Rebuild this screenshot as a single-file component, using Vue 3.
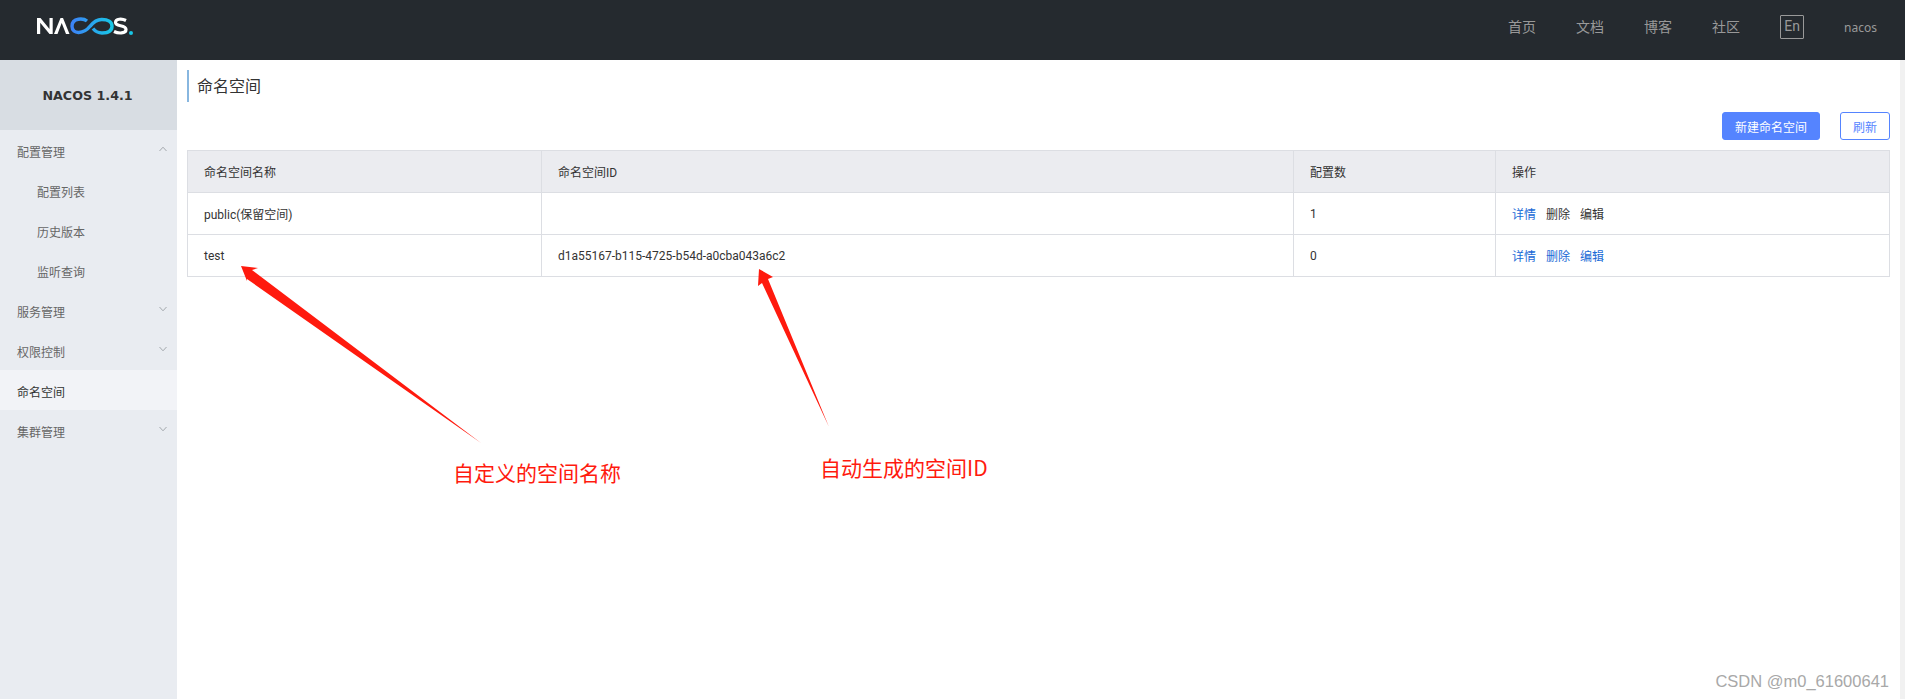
<script setup>
const menu = [
  { label: '配置管理', arrow: 'up' },
  { label: '配置列表', sub: true },
  { label: '历史版本', sub: true },
  { label: '监听查询', sub: true },
  { label: '服务管理', arrow: 'down' },
  { label: '权限控制', arrow: 'down' },
  { label: '命名空间', active: true },
  { label: '集群管理', arrow: 'down' }
]
const navs = ['首页', '文档', '博客', '社区']
const rows = [
  { name: 'public(保留空间)', id: '', count: 1, locked: true },
  { name: 'test', id: 'd1a55167-b115-4725-b54d-a0cba043a6c2', count: 0, locked: false }
]
</script>

<template>
  <div class="page">
    <header class="header">
      <svg class="logo" width="100" height="20" viewBox="0 0 100 20">
        <defs>
          <linearGradient id="loop" x1="0" x2="1" y1="0" y2="0">
            <stop offset="0" stop-color="#3c83f6" />
            <stop offset="1" stop-color="#18c6e6" />
          </linearGradient>
        </defs>
        <polygon points="1,18 1,2 4.5,2 13.5,13 13.5,2 16.7,2 16.7,18 13.5,18 4.2,6.8 4.2,18" fill="#fff" />
        <polygon points="18,18 24.5,2 27,2 33.5,18 30,18 25.7,7 21.5,18" fill="#fff" />
        <path d="M51 5C48 2.5 36 1 36 10.3C36 19 48 18 54 10.3C60 3 64 3.5 66 3.5C72 3.5 76 6 76 10.3C76 15 72 17 66 17C62 17 59 15 57 12.5" fill="none" stroke="url(#loop)" stroke-width="3.4" />
        <path d="M90 4.5C86 2.5 79.5 2.5 79.5 6.5C79.5 11 90 8.5 90 13.5C90 18 82 17.5 78 15.5" fill="none" stroke="#fff" stroke-width="3.2" />
        <circle cx="95" cy="17" r="2" fill="#18c6e6" />
      </svg>
      <nav class="nav">
        <a v-for="n in navs" :key="n" class="nav-item">{{ n }}</a>
        <span class="lang">En</span>
        <span class="user">nacos</span>
      </nav>
    </header>

    <div class="body">
      <aside class="side">
        <div class="version">NACOS 1.4.1</div>
        <div
          v-for="m in menu"
          :key="m.label"
          :class="['menu-item', { sub: m.sub, active: m.active }]"
        >
          <span>{{ m.label }}</span>
          <svg v-if="m.arrow" class="caret" width="8" height="6" viewBox="0 0 8 6">
            <path :d="m.arrow === 'up' ? 'M.5 5L4 1.2L7.5 5' : 'M.5 1L4 4.8L7.5 1'" fill="none" stroke="#a3a8ad" stroke-width="1" />
          </svg>
        </div>
      </aside>

      <main class="main">
        <h1 class="title">命名空间</h1>
        <div class="toolbar">
          <button class="btn primary">新建命名空间</button>
          <button class="btn normal">刷新</button>
        </div>
        <table class="table">
          <colgroup>
            <col style="width: 354px" />
            <col style="width: 752px" />
            <col style="width: 202px" />
            <col />
          </colgroup>
          <thead>
            <tr>
              <th>命名空间名称</th>
              <th>命名空间ID</th>
              <th>配置数</th>
              <th>操作</th>
            </tr>
          </thead>
          <tbody>
            <tr v-for="r in rows" :key="r.name">
              <td>{{ r.name }}</td>
              <td>{{ r.id }}</td>
              <td>{{ r.count }}</td>
              <td class="ops">
                <a class="link">详情</a>
                <a :class="r.locked ? 'plain' : 'link'">删除</a>
                <a :class="r.locked ? 'plain' : 'link'">编辑</a>
              </td>
            </tr>
          </tbody>
        </table>
      </main>
      <div class="scroll"></div>
    </div>

    <!-- 截图上的红色标注 -->
    <svg class="marks" width="1905" height="699" viewBox="0 0 1905 699">
      <polygon points="241,266 258,268 252,270 481,443 247,279 247,281" fill="#ff1a0e" />
      <polygon points="759,269 773,277 768,279 829,427 762,283 758,286" fill="#ff1a0e" />
    </svg>
    <span class="note note-a">自定义的空间名称</span>
    <span class="note note-b">自动生成的空间ID</span>
    <span class="watermark">CSDN @m0_61600641</span>
  </div>
</template>

<style>
html, body {
  margin: 0;
  background: #fff;
  overflow: hidden;
}
</style>

<style scoped>
.page {
  position: relative;
  width: 1905px;
  height: 699px;
  overflow: hidden;
  font-family: Roboto, "Noto Sans CJK SC", sans-serif;
  font-size: 12px;
  color: #333;
}

.header {
  height: 60px;
  background: #252a2f;
  display: flex;
  align-items: center;
  justify-content: space-between;
  padding: 0 28px 0 36px;
  box-sizing: border-box;
}
.logo {
  margin-top: -8px;
}
.nav {
  display: flex;
  align-items: center;
  color: #999;
  margin-top: -6px;
}
.nav-item {
  font-size: 14px;
  margin-right: 40px;
  margin-top: -2px;
}
.lang {
  width: 24px;
  height: 24px;
  box-sizing: border-box;
  border: 1px solid #999;
  border-radius: 1px;
  font-size: 14px;
  line-height: 20px;
  text-align: center;
  margin-right: 40px;
}
.user {
  font-family: "Noto Sans", sans-serif;
  font-size: 12px;
}

.body {
  display: flex;
  height: 639px;
}
.side {
  width: 177px;
  flex: none;
  background: #e9ecf1;
  color: #666;
}
.version {
  height: 70px;
  line-height: 72px;
  padding-right: 2px;
  box-sizing: border-box;
  background: #d8dde3;
  text-align: center;
  font-family: "DejaVu Sans", sans-serif;
  font-weight: 700;
  font-size: 12.7px;
  color: #333;
}
.menu-item {
  height: 40px;
  display: flex;
  align-items: center;
  justify-content: space-between;
  padding: 2px 10px 0 17px;
  box-sizing: border-box;
}
.menu-item.sub {
  padding-left: 37px;
}
.menu-item.active {
  background: #f2f3f7;
  color: #333;
}
.caret {
  margin-top: -4px;
}

.main {
  flex: 1;
  padding: 10px 10px 0 10px;
  min-width: 0;
}
.title {
  margin: 0;
  height: 32px;
  line-height: 34px;
  font-size: 16px;
  font-weight: 400;
  border-left: 2px solid #88b7e0;
  padding-left: 8px;
}
.toolbar {
  display: flex;
  justify-content: flex-end;
  gap: 20px;
  padding: 10px 0;
}
.btn {
  height: 28px;
  border-radius: 3px;
  font-family: inherit;
  font-size: 12px;
  padding: 0;
  box-sizing: border-box;
}
.primary {
  width: 98px;
  background: #5584ff;
  border: 1px solid #5584ff;
  color: #fff;
}
.normal {
  width: 50px;
  background: #fff;
  border: 1px solid #5584ff;
  color: #5584ff;
}

.table {
  width: 100%;
  table-layout: fixed;
  border-collapse: collapse;
}
.table th,
.table td {
  height: 42px;
  padding: 0 16px;
  border: 1px solid #dcdee3;
  box-sizing: border-box;
  text-align: left;
  font-weight: 400;
  color: #333;
}
.table th {
  background: #ebecf0;
}
.ops a {
  margin-right: 10px;
}
.link {
  color: #1a6ad6;
}
.plain {
  color: #333;
}
.scroll {
  width: 5px;
  flex: none;
  background: #f1f1f1;
}

.marks {
  position: absolute;
  left: 0;
  top: 0;
  pointer-events: none;
}
.note {
  position: absolute;
  font-size: 21px;
  line-height: 24px;
  color: #ff1a0e;
  font-family: "Noto Sans CJK SC", sans-serif;
}
.note-a {
  left: 453px;
  top: 460px;
}
.note-b {
  left: 820px;
  top: 455px;
}
.watermark {
  position: absolute;
  right: 16px;
  top: 671px;
  font-family: "Liberation Sans", sans-serif;
  font-size: 16.5px;
  line-height: 20px;
  color: #a8a8a8;
}
</style>
